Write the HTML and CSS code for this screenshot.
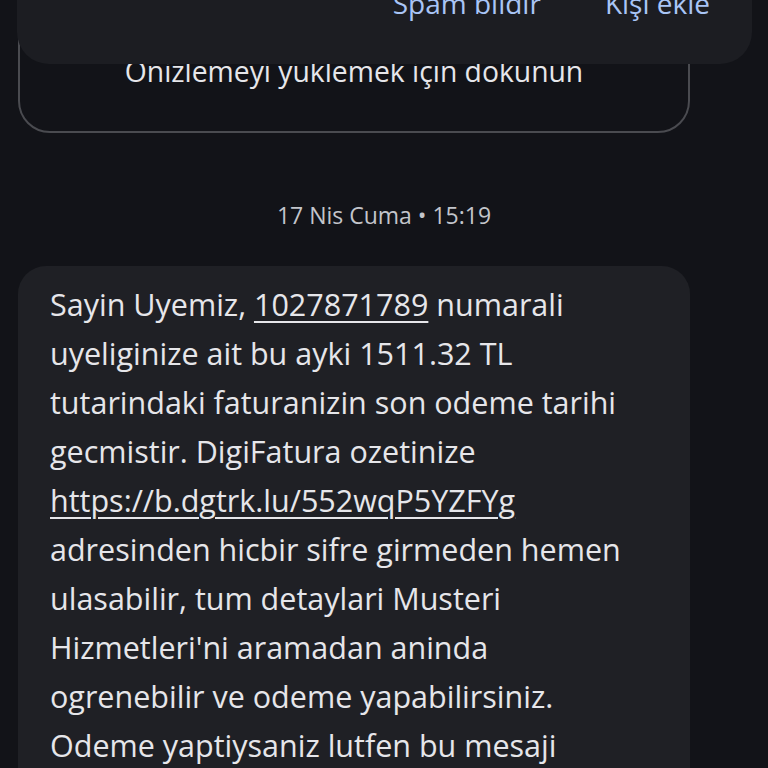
FILE: index.html
```html
<!DOCTYPE html>
<html lang="tr">
<head>
<meta charset="utf-8">
<link rel="stylesheet" href="styles.css">
</head>
<body>
<div class="screen">
  <div class="popup">
    <div class="actions">
      <span class="action">Spam bildir</span>
      <span class="action">Kişi ekle</span>
    </div>
  </div>
  <div class="thread">
    <div class="preview">
      <span class="preview-text">Önizlemeyi yüklemek için dokunun</span>
    </div>
    <div class="stamp">17 Nis Cuma • 15:19</div>
    <div class="bubble">
      <p class="msg">Sayin Uyemiz, <span class="link">1027871789</span> numarali uyeliginize ait bu ayki 1511.32 TL tutarindaki faturanizin son odeme tarihi gecmistir. DigiFatura ozetinize <span class="link">https://b.dgtrk.lu/552wqP5YZFYg</span> adresinden hicbir sifre girmeden hemen ulasabilir, tum detaylari Musteri Hizmetleri'ni aramadan aninda ogrenebilir ve odeme yapabilirsiniz. Odeme yaptiysaniz lutfen bu mesaji dikkate almayiniz.</p>
    </div>
  </div>
</div>
</body>
</html>
```

FILE: styles.css
```css
* { box-sizing: border-box; }
html, body {
  margin: 0;
  padding: 0;
  background: #121318;
  width: 768px;
  height: 768px;
  overflow: hidden;
}
.screen {
  position: relative;
  width: 768px;
  height: 768px;
  overflow: hidden;
  font-family: "Open Sans", Roboto, sans-serif;
  color: #e4e4e9;
}
.popup {
  position: absolute;
  top: -60px;
  left: 17px;
  right: 16px;
  height: 124px;
  background: #1c1d22;
  border-radius: 0 0 32px 32px;
  z-index: 2;
}
.actions {
  position: absolute;
  bottom: 46px;
  right: 42px;
  display: flex;
  gap: 64px;
  font-size: 28px;
  line-height: 30px;
  color: #a9c5f6;
}
.thread {
  padding: 0 78px 0 18px;
}
.preview {
  margin-top: -60px;
  height: 193px;
  border: 2px solid #4a4b50;
  border-radius: 32px;
  display: flex;
  align-items: flex-end;
  justify-content: center;
  padding-bottom: 44px;
}
.preview-text {
  font-size: 28.3px;
  line-height: 32px;
  color: #e6e6ea;
}
.stamp {
  text-align: center;
  font-size: 23px;
  line-height: 24px;
  color: #c3c5cb;
  margin-top: 70px;
  padding-left: 60px;
}
.bubble {
  margin-top: 39px;
  background: #1f2025;
  border-radius: 28px;
  padding: 14px 50px 20px 32px;
}
.msg {
  margin: 0;
  font-size: 30.5px;
  line-height: 49px;
  color: #e6e6ea;
}
.link {
  text-decoration: underline;
  text-decoration-thickness: 2px;
  text-underline-offset: 5px;
}
```
